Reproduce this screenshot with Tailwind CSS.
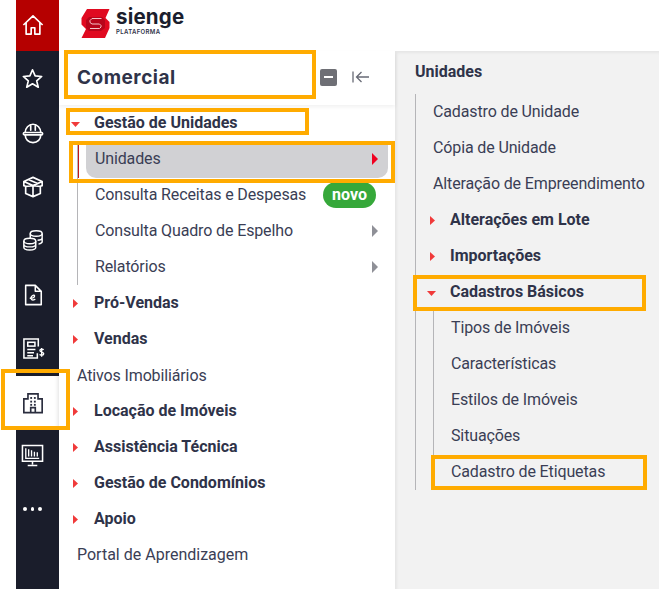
<!doctype html>
<html><head><meta charset="utf-8"><script src="https://cdn.jsdelivr.net/npm/@tailwindcss/browser@4"></script></head>
<body class="bg-white">
<div class="relative w-[659px] h-[589px] overflow-hidden flex font-['Roboto',sans-serif] text-[16px] text-[#2f3349] bg-white">
  <div class="w-4 shrink-0"></div>
  <!-- rail -->
  <nav class="w-[43px] shrink-0 bg-[#1a1d2b] text-white flex flex-col items-center">
    <div class="h-[51px] w-full bg-[#b50000] flex items-center justify-center pr-[10px] pb-[1px]">
      <svg class="w-[22px] h-[22px]" viewBox="0 0 24 24" fill="none" stroke="currentColor" stroke-width="1.800" stroke-linejoin="round"><path d="M1.500 12 12 2l10.500 10M4.500 9.500V22h5.500v-7h4v7h5.500V9.500"/></svg>
    </div>
    <div class="h-[1px]"></div>
    <div class="h-[54px] w-full flex items-center justify-center pr-[10px] pb-[2px]"><svg class="w-[21px] h-[21px]" viewBox="0 0 24 24" fill="none" stroke="currentColor" stroke-width="1.900" stroke-linejoin="round"><path d="m12 2 3 7 7.500.7-5.700 5 1.800 7.300L12 18l-6.600 4 1.800-7.300-5.700-5L9 9z"/></svg></div>
    <div class="h-[54px] w-full flex items-center justify-center pr-[10px]"><svg class="w-[22px] h-[22px]" viewBox="0 0 24 24" fill="none" stroke="currentColor" stroke-width="1.800" stroke-linecap="round"><path d="M3.500 11.500a8.500 9 0 0 1 17 0M9.500 3v6M14.500 3v6"/><rect x="1.500" y="11.500" width="21" height="2.500" rx="1.250"/><path d="M3.500 14c0 5 3.500 8.500 8.500 8.500s8.500-3.500 8.500-8.500"/></svg></div>
    <div class="h-[54px] w-full flex items-center justify-center pr-[10px]"><svg class="w-[22px] h-[22px]" viewBox="0 0 24 24" fill="none" stroke="currentColor" stroke-width="1.800" stroke-linejoin="round"><path d="M12 1.500 2 6v4.500l2 .8V19l8 3.500 8-3.500v-7.700l2-.8V6zM2 6l10 4.500L22 6M4 11.300l8-.8 8 .8M12 10.500v12M7 3.800l10 4.500"/></svg></div>
    <div class="h-[54px] w-full flex items-center justify-center pr-[10px] pb-[2px]"><svg class="w-[22px] h-[22px]" viewBox="0 0 24 24" fill="none" stroke="currentColor" stroke-width="1.600"><ellipse cx="15.500" cy="5" rx="6.500" ry="3"/><path d="M9 5v6M22 5v9c0 1-1.500 2-4 2.500M22 9.500c0 1.300-2 2.500-5 2.800"/><ellipse cx="8.500" cy="13" rx="6.500" ry="3"/><path d="M2 13v7c0 1.700 3 3 6.500 3s6.500-1.300 6.500-3v-7M2 16.500c0 1.700 3 3 6.500 3s6.500-1.300 6.500-3"/></svg></div>
    <div class="h-[54px] w-full flex items-center justify-center pr-[10px]"><svg class="w-[22px] h-[22px]" viewBox="0 0 24 24" fill="none" stroke="currentColor" stroke-width="1.700" stroke-linejoin="round"><path d="M4 1.500h10.500L21 8v14.500H4zM14.500 1.500V8H21"/><path d="M9 15.500c2 .3 5-.8 4.700-2.500-.3-1.500-3-.8-3.700 1.500-.6 2.200 1 4 4 2.300" stroke-width="1.500" stroke-linecap="round"/></svg></div>
    <div class="h-[54px] w-full flex items-center justify-center pr-[9px] pb-[2px]"><svg class="w-[23px] h-[23px]" viewBox="0 0 24 24" fill="none" stroke="currentColor" stroke-width="1.600"><path d="M16 17v5H2V2h15v8"/><rect x="6" y="5.500" width="7.500" height="4"/><path d="M5.500 13h8.500M5.500 16.500h7M5.500 19.500h6"/><path d="M22.500 13.500c-.5-1-3.800-1.200-3.800.7 0 2 4 1.300 4 3.300 0 2-3.700 1.800-4.300.7M20.500 11.500v9" stroke-width="1.400"/></svg></div>
    <div class="h-[54px] w-full bg-white flex items-center justify-center text-[#2a2d3e] pr-[10px] shadow-[inset_-4px_0_4px_-3px_rgba(0,0,0,.12)]"><svg class="w-[22px] h-[22px]" viewBox="0 0 24 24" fill="none" stroke="currentColor" stroke-width="1.800"><path d="M2 22.500V7.500h4.500V2h11v5.500H22v15zM9.500 22.500V17h5v5.500"/><g fill="currentColor" stroke="none"><rect x="9" y="5.500" width="2" height="2"/><rect x="13" y="5.500" width="2" height="2"/><rect x="9" y="9.500" width="2" height="2"/><rect x="13" y="9.500" width="2" height="2"/><rect x="9" y="13" width="2" height="2"/><rect x="13" y="13" width="2" height="2"/></g></svg></div>
    <div class="h-[50px] w-full flex items-center justify-center pr-[10px]"><svg class="w-[23px] h-[23px]" viewBox="0 0 24 24" fill="none" stroke="currentColor" stroke-width="1.600"><path d="M1.500 1.500h21V18h-21zM12 18v3.500M7 22.500h10"/><path d="M5 4.500v10.500h14M8 5.500V13M11 6.500V13M14 8V13M17 8.500V13" stroke-width="1.400"/></svg></div>
    <div class="h-[58px] w-full flex items-center justify-center gap-[4px] pr-[10px]"><span class="w-[3.500px] h-[3.500px] rounded-full bg-white"></span><span class="w-[3.500px] h-[3.500px] rounded-full bg-white"></span><span class="w-[3.500px] h-[3.500px] rounded-full bg-white"></span></div>
  </nav>
  <!-- main -->
  <div class="flex-1 flex flex-col min-w-0">
    <header class="h-[51px] shrink-0 flex items-start pl-[22px] pt-[9px] gap-[6px] bg-white">
      <svg class="w-[29px] h-[29px]" viewBox="0 0 29 29">
        <path d="M6 0h22.500l-4 9 4 4v6l-4.500 10H.5l4.500-9-4.500-4.500V9z" fill="#e00a20"/>
        <path d="M8 8h13l3 3v8l-4 3H8l-3-3v-8z" fill="#b8051a"/>
        <path d="M20.500 9.500H11l-2 2v2l2 1.500h7.500l1.500 1.500v1.500l-1.500 1.500H9" fill="none" stroke="#f4c4c8" stroke-width="1"/>
      </svg>
      <div class="flex flex-col mt-[-2px]">
        <span class="font-['Inter',sans-serif] font-bold text-[20.500px] leading-[20px] tracking-[.2px] text-[#1b1e2e]">sienge</span>
        <span class="font-['Inter',sans-serif] font-semibold text-[6px] leading-[8px] mt-[1px] tracking-[.35px] text-[#2f3349]">PLATAFORMA</span>
      </div>
    </header>
    <div class="flex-1 flex min-h-0">
      <!-- left menu -->
      <section class="w-[336px] shrink-0 bg-white">
        <div class="h-[54px] flex items-center pl-[18px] pb-[2px] shadow-[0_2px_4px_rgba(0,0,0,.06)] relative">
          <h1 class="font-['Inter',sans-serif] font-bold text-[19px] leading-none tracking-[.5px] text-[#2f3349] w-[243px]">Comercial</h1>
          <span class="w-[17px] h-[17px] rounded-[2px] bg-[#6e6f75] flex items-center justify-center"><span class="w-[9px] h-[2px] bg-white"></span></span>
          <svg class="w-5 h-[14px] ml-[14px] text-[#676a75]" viewBox="0 0 20 14" fill="none" stroke="currentColor" stroke-width="1.300"><path d="M2 1.500v11M18 7H5.500M10.500 2 5.500 7l5 5"/></svg>
        </div>
        <ul class="list-none">
          <li class="h-9 flex items-center font-bold pl-[12px]"><svg class="w-[9px] h-[5px] mr-[14px] mt-[2px] fill-[#f03a3a]" viewBox="0 0 9 5"><path d="M0 0h9L4.500 5z"/></svg><span>Gestão de Unidades</span></li>
          <li>
            <ul class="ml-[18px] border-l border-[#b5b5b8] relative w-[311px] h-[144px] list-none tracking-[-.13px]">
              <li class="absolute left-0 top-0 h-[37px] w-px bg-[#c4161c]"></li>
              <li class="h-[37px] mb-[-1px] pb-[1px] ml-[8px] pl-[9px] pr-[10px] bg-[#d1d1d4] rounded-b-[10px] flex items-center justify-between text-[#3a3e55]"><span>Unidades</span><svg class="w-[6px] h-[12px] fill-[#f00020]" viewBox="0 0 6 12"><path d="M0 0l6 6-6 6z"/></svg></li>
              <li class="h-9 pl-[17px] pr-[12px] flex items-center justify-between text-[#3a3e55]"><span>Consulta Receitas e Despesas</span><span class="h-[26px] px-[9px] rounded-full bg-[#36a83a] text-white font-bold flex items-center tracking-normal">novo</span></li>
              <li class="h-9 pl-[17px] pr-[10px] flex items-center justify-between text-[#3a3e55]"><span>Consulta Quadro de Espelho</span><svg class="w-[6px] h-[12px] fill-[#8f9097]" viewBox="0 0 6 12"><path d="M0 0l6 6-6 6z"/></svg></li>
              <li class="h-9 pl-[17px] pr-[10px] flex items-center justify-between text-[#3a3e55]"><span>Relatórios</span><svg class="w-[6px] h-[12px] fill-[#8f9097]" viewBox="0 0 6 12"><path d="M0 0l6 6-6 6z"/></svg></li>
            </ul>
          </li>
          <li class="h-9 flex items-center font-bold pl-[14px]"><svg class="w-[5px] h-[9px] mr-[16px] fill-[#f03a3a]" viewBox="0 0 5 9"><path d="M0 0l5 4.500L0 9z"/></svg><span>Pró-Vendas</span></li>
          <li class="h-9 flex items-center font-bold pl-[14px]"><svg class="w-[5px] h-[9px] mr-[16px] fill-[#f03a3a]" viewBox="0 0 5 9"><path d="M0 0l5 4.500L0 9z"/></svg><span>Vendas</span></li>
          <li class="h-9 flex items-center pl-[18px] pt-[2px] text-[#3a3e55] tracking-[-.13px]">Ativos Imobiliários</li>
          <li class="h-9 flex items-center font-bold pl-[14px]"><svg class="w-[5px] h-[9px] mr-[16px] fill-[#f03a3a]" viewBox="0 0 5 9"><path d="M0 0l5 4.500L0 9z"/></svg><span>Locação de Imóveis</span></li>
          <li class="h-9 flex items-center font-bold pl-[14px]"><svg class="w-[5px] h-[9px] mr-[16px] fill-[#f03a3a]" viewBox="0 0 5 9"><path d="M0 0l5 4.500L0 9z"/></svg><span>Assistência Técnica</span></li>
          <li class="h-9 flex items-center font-bold pl-[14px]"><svg class="w-[5px] h-[9px] mr-[16px] fill-[#f03a3a]" viewBox="0 0 5 9"><path d="M0 0l5 4.500L0 9z"/></svg><span>Gestão de Condomínios</span></li>
          <li class="h-9 flex items-center font-bold pl-[14px]"><svg class="w-[5px] h-[9px] mr-[16px] fill-[#f03a3a]" viewBox="0 0 5 9"><path d="M0 0l5 4.500L0 9z"/></svg><span>Apoio</span></li>
          <li class="h-9 flex items-center pl-[18px] text-[#3a3e55]">Portal de Aprendizagem</li>
        </ul>
      </section>
      <!-- right panel -->
      <section class="flex-1 bg-[#f2f2f2] pl-[20px] pt-[10px] shadow-[inset_2px_2px_3px_rgba(0,0,0,.05)]">
        <h2 class="font-bold h-[33px] leading-[22px] text-[#2f3349]">Unidades</h2>
        <ul class="border-l border-[#b5b5b8] w-[240px] list-none text-[#3a3e55] tracking-[-.13px]">
          <li class="h-9 flex items-center pl-[17px]">Cadastro de Unidade</li>
          <li class="h-9 flex items-center pl-[17px]">Cópia de Unidade</li>
          <li class="h-9 flex items-center pl-[17px]">Alteração de Empreendimento</li>
          <li class="h-9 flex items-center pl-[14px] font-bold text-[#2f3349] tracking-normal"><svg class="w-[5px] h-[9px] mr-[15px] fill-[#f03a3a]" viewBox="0 0 5 9"><path d="M0 0l5 4.500L0 9z"/></svg><span>Alterações em Lote</span></li>
          <li class="h-9 flex items-center pl-[14px] font-bold text-[#2f3349] tracking-normal"><svg class="w-[5px] h-[9px] mr-[15px] fill-[#f03a3a]" viewBox="0 0 5 9"><path d="M0 0l5 4.500L0 9z"/></svg><span>Importações</span></li>
          <li class="h-9 flex items-center pl-[11px] font-bold text-[#2f3349] tracking-normal"><svg class="w-[9px] h-[5px] mr-[14px] mt-[2px] fill-[#f03a3a]" viewBox="0 0 9 5"><path d="M0 0h9L4.500 5z"/></svg><span>Cadastros Básicos</span></li>
          <li>
            <ul class="ml-[17px] border-l border-[#b5b5b8] list-none">
              <li class="h-9 flex items-center pl-[17px]">Tipos de Imóveis</li>
              <li class="h-9 flex items-center pl-[17px]">Características</li>
              <li class="h-9 flex items-center pl-[17px]">Estilos de Imóveis</li>
              <li class="h-9 flex items-center pl-[17px]">Situações</li>
              <li class="h-9 flex items-center pl-[17px]">Cadastro de Etiquetas</li>
            </ul>
          </li>
        </ul>
      </section>
    </div>
  </div>
  <!-- annotation boxes -->
  <div class="absolute left-[64px] top-[50px] w-[252px] h-[49px] border-4 border-[#ffab00]"></div>
  <div class="absolute left-[66px] top-[108px] w-[243px] h-[27px] border-4 border-[#ffab00]"></div>
  <div class="absolute left-[69px] top-[141px] w-[326px] h-[42px] border-4 border-[#ffab00]"></div>
  <div class="absolute left-[1px] top-[369px] w-[69px] h-[61px] border-4 border-[#ffab00]"></div>
  <div class="absolute left-[413px] top-[275px] w-[233px] h-[36px] border-4 border-[#ffab00]"></div>
  <div class="absolute left-[431px] top-[455px] w-[216px] h-[35px] border-4 border-[#ffab00]"></div>
</div>
</body></html>
